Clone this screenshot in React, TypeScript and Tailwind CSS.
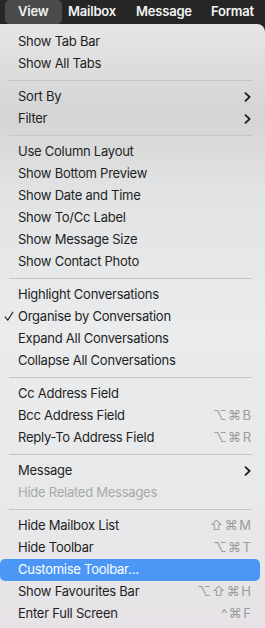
import React from 'react';

type Item =
  | { kind: 'sep' }
  | {
      kind?: 'item';
      label: string;
      shortcut?: string;
      submenu?: boolean;
      checked?: boolean;
      disabled?: boolean;
      active?: boolean;
    };

const items: Item[] = [
  { label: 'Show Tab Bar' },
  { label: 'Show All Tabs' },
  { kind: 'sep' },
  { label: 'Sort By', submenu: true },
  { label: 'Filter', submenu: true },
  { kind: 'sep' },
  { label: 'Use Column Layout' },
  { label: 'Show Bottom Preview' },
  { label: 'Show Date and Time' },
  { label: 'Show To/Cc Label' },
  { label: 'Show Message Size' },
  { label: 'Show Contact Photo' },
  { kind: 'sep' },
  { label: 'Highlight Conversations' },
  { label: 'Organise by Conversation', checked: true },
  { label: 'Expand All Conversations' },
  { label: 'Collapse All Conversations' },
  { kind: 'sep' },
  { label: 'Cc Address Field' },
  { label: 'Bcc Address Field', shortcut: '⌥⌘B' },
  { label: 'Reply-To Address Field', shortcut: '⌥⌘R' },
  { kind: 'sep' },
  { label: 'Message', submenu: true },
  { label: 'Hide Related Messages', disabled: true },
  { kind: 'sep' },
  { label: 'Hide Mailbox List', shortcut: '⇧⌘M' },
  { label: 'Hide Toolbar', shortcut: '⌥⌘T' },
  { label: 'Customise Toolbar…', active: true },
  { label: 'Show Favourites Bar', shortcut: '⌥⇧⌘H' },
  { label: 'Enter Full Screen', shortcut: '^⌘F' },
];

const Chevron = () => (
  <svg width="7" height="10" viewBox="0 0 7 10" className="text-[#1c1c1c]">
    <path d="M1.5 1.2 L5.6 5 L1.5 8.8" fill="none" stroke="currentColor" strokeWidth="1.8" strokeLinecap="round" strokeLinejoin="round" />
  </svg>
);

const Check = () => (
  <svg width="10" height="11" viewBox="0 0 10 11" className="text-[#1c1c1c]">
    <path d="M1.2 6 L3.7 9.2 L8.8 1.2" fill="none" stroke="currentColor" strokeWidth="1.2" strokeLinecap="round" strokeLinejoin="round" />
  </svg>
);

export default function App() {
  return (
    <div className="w-[265px] h-[628px] overflow-hidden bg-[#262626] font-['Inter','Noto_Sans',sans-serif] text-[13px] antialiased">
      {/* Menu bar */}
      <div className="h-6 flex items-center text-[#f4f4f4] font-semibold tracking-[-0.2px] whitespace-nowrap">
        <div className="ml-[5px] h-6 w-[57px] rounded-[5px] bg-[#4b4b4b] flex items-center pl-[13px]">View</div>
        <div className="ml-[6px] w-[68px]">Mailbox</div>
        <div className="w-[75px]">Message</div>
        <div>Format</div>
      </div>

      {/* Menu panel */}
      <div className="h-[604px] rounded-tr-[8px] bg-[linear-gradient(180deg,#e6e6e6_0px,#d4d4d4_90px,#e2e3e4_170px,#e9ebec_300px,#e8e9ea_470px,#e6e1e6_628px)] pt-[7px]">
        {items.map((it, i) =>
          it.kind === 'sep' ? (
            <div key={i} className="h-[11px] flex items-center px-[9px]">
              <div className="h-px w-[243px] bg-[#c6c6c6]" />
            </div>
          ) : (
            <div
              key={i}
              className={
                'relative h-[22px] flex items-center pl-[18px] pr-[14px] whitespace-nowrap ' +
                (it.active ? 'w-[260px] rounded-[5px] bg-[#4c97f6] text-white' : it.disabled ? 'text-[#a9a9a9]' : 'text-[#1f1f1f]')
              }
            >
              {it.checked && (
                <span className="absolute left-[4px] top-[5px]">
                  <Check />
                </span>
              )}
              <span className="flex-1 tracking-[-0.25px]">{it.label}</span>
              {it.shortcut && <span className="text-[#9b9b9b] tracking-[1.5px] -mr-[1.5px]">{it.shortcut}</span>}
              {it.submenu && (
                <span>
                  <Chevron />
                </span>
              )}
            </div>
          )
        )}
      </div>
    </div>
  );
}
